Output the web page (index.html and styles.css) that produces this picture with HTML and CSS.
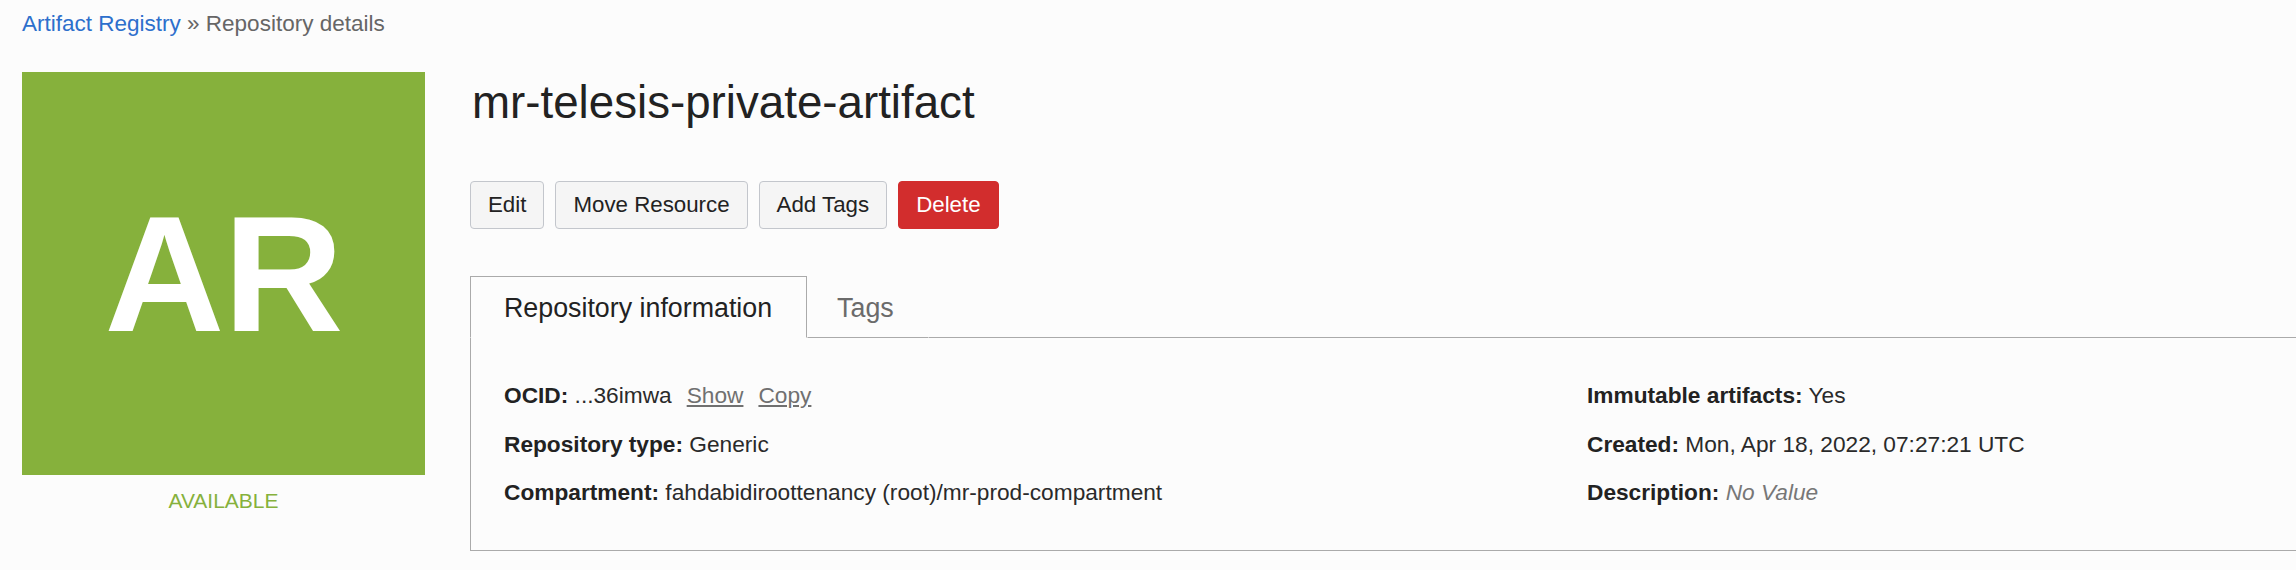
FILE: index.html
```html
<!DOCTYPE html>
<html lang="en">
<head>
<meta charset="utf-8">
<title>Repository details</title>
<link rel="stylesheet" href="styles.css">
</head>
<body>
<nav class="crumbs"><a class="crumb-link" href="#">Artifact Registry</a> <span class="crumb-sep">»</span> <span class="crumb-current">Repository details</span></nav>
<div class="page">
  <aside class="side">
    <div class="badge"><span class="badge-text">AR</span></div>
    <div class="status">AVAILABLE</div>
  </aside>
  <main class="main">
    <h1 class="title">mr-telesis-private-artifact</h1>
    <div class="actions">
      <button class="btn">Edit</button>
      <button class="btn">Move Resource</button>
      <button class="btn">Add Tags</button>
      <button class="btn btn-danger">Delete</button>
    </div>
    <div class="tabs">
      <div class="tab tab-active">Repository information</div>
      <div class="tab tab-idle">Tags</div>
      <div class="tab-rest"></div>
    </div>
    <section class="panel">
      <div class="info-col info-left">
        <div class="row"><span class="label">OCID:</span> ...36imwa<a class="sublink" href="#">Show</a><a class="sublink" href="#">Copy</a></div>
        <div class="row"><span class="label">Repository type:</span> Generic</div>
        <div class="row"><span class="label">Compartment:</span> fahdabidiroottenancy (root)/mr-prod-compartment</div>
      </div>
      <div class="info-col">
        <div class="row"><span class="label">Immutable artifacts:</span> Yes</div>
        <div class="row"><span class="label">Created:</span> Mon, Apr 18, 2022, 07:27:21 UTC</div>
        <div class="row"><span class="label">Description:</span> <em class="empty">No Value</em></div>
      </div>
    </section>
  </main>
</div>
</body>
</html>
```

FILE: styles.css
```css
html, body {
  margin: 0;
  padding: 0;
  background: #fcfcfc;
  overflow: hidden;
}
body {
  font-family: "Liberation Sans", Arial, sans-serif;
  color: #222;
  padding: 11px 0 0 22px;
}
.crumbs {
  font-size: 22.5px;
  line-height: 26px;
  color: #666;
  height: 26px;
}
.crumb-link {
  color: #2d6fcc;
  text-decoration: none;
}
.crumb-sep {
  color: #666;
}
.page {
  display: flex;
  gap: 45px;
  margin-top: 35px;
}
.side {
  width: 403px;
  flex: none;
}
.badge {
  width: 403px;
  height: 403px;
  background: #86b13c;
  display: flex;
  align-items: center;
  justify-content: center;
}
.badge-text {
  color: #fff;
  font-weight: bold;
  font-size: 166px;
  line-height: 1;
  letter-spacing: -1px;
}
.status {
  margin-top: 14px;
  text-align: center;
  color: #86b13c;
  font-size: 21px;
  line-height: 24px;
}
.main {
  flex: none;
  width: 2240px;
}
.title {
  margin: 4px 0 0 2px;
  font-size: 45.7px;
  line-height: 54px;
  font-weight: normal;
  color: #222;
}
.actions {
  display: flex;
  gap: 11px;
  margin-top: 51px;
}
.btn {
  font-family: "Liberation Sans", Arial, sans-serif;
  font-size: 22.3px;
  line-height: 46px;
  padding: 0 17px;
  border: 1px solid #c3c6cc;
  border-radius: 4px;
  background: #f5f5f5;
  color: #222;
}
.btn-danger {
  background: #d22d2d;
  border-color: #d22d2d;
  color: #fff;
}
.tabs {
  display: flex;
  margin-top: 47px;
}
.tab {
  font-size: 26.8px;
  line-height: 30px;
  padding: 16px 34px 14px 33px;
  border: 1px solid transparent;
  border-bottom-color: #aaa;
}
.tab-active {
  border-color: #aaa;
  border-bottom-color: transparent;
  color: #222;
}
.tab-idle {
  color: #6b6b6b;
  padding-left: 29px;
}
.tab-rest {
  flex: 1;
  border-bottom: 1px solid #aaa;
}
.panel {
  display: grid;
  grid-template-columns: 1083px 1fr;
  border-left: 1px solid #aaa;
  border-bottom: 1px solid #aaa;
  padding: 44px 0 22px 33px;
}
.row {
  font-size: 22.7px;
  line-height: 26px;
  margin-bottom: 22.5px;
  color: #2a2a2a;
  white-space: nowrap;
}
.label {
  font-weight: bold;
  color: #222;
}
.sublink {
  color: #707070;
  text-decoration: underline;
  margin-left: 15px;
}
.empty {
  color: #777;
}
```
